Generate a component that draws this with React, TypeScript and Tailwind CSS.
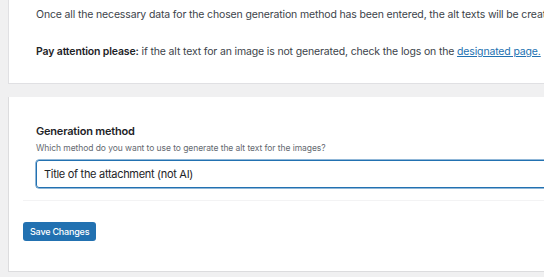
export default function App() {
  return (
    <main
      className="h-[277px] w-[544px] overflow-hidden bg-[#f0f0f1] pl-2"
      style={{ fontFamily: "Inter, 'Liberation Sans', sans-serif" }}
    >
      {/* Info panel */}
      <section className="h-[84px] w-[600px] border-b border-l border-[#e0e0e3] bg-white pl-[27px] pt-[8px] text-[10.5px] tracking-[-0.15px] text-[#3c434a]">
        <p className="whitespace-nowrap leading-[14px]">
          Once all the necessary data for the chosen generation method has been entered, the alt texts will be created automatically.
        </p>
        <p className="mt-[23px] whitespace-nowrap leading-[14px]">
          <strong className="font-semibold text-[#1d2327]">Pay attention please:</strong> if the alt text for an image is not generated, check the logs on the{" "}
          <a href="#" className="text-[#2271b1] underline">
            designated page.
          </a>
        </p>
      </section>

      {/* Settings panel */}
      <section className="mt-[13px] h-[175px] w-[600px] border-b border-l border-[#dcdcde] bg-white">
        <div className="ml-[14px] border-b border-[#f3f3f4] pb-[12px] pl-[13px] pt-[27px]">
          <h2 className="text-[11px] font-semibold leading-[14px] tracking-[-0.2px] text-[#1d2327]">Generation method</h2>
          <p className="mt-[4px] text-[8.5px] leading-[12px] tracking-[-0.07px] text-[#646970]">
            Which method do you want to use to generate the alt text for the images?
          </p>
          <div className="mt-[6px] flex h-[28px] w-[560px] items-center rounded-[3px] border border-[#2271b1] px-[7px] text-[11px] tracking-[-0.3px] text-[#1d2327] shadow-[0_0_0_0.5px_#2271b1]">
            Title of the attachment (not AI)
          </div>
        </div>
        <div className="flex pl-[14px] pt-[21px]">
          <button className="h-[19px] rounded-[3px] bg-[#2271b1] px-[7px] text-[9px] font-medium leading-[19px] tracking-[-0.2px] text-white">
            Save Changes
          </button>
        </div>
      </section>
    </main>
  );
}
